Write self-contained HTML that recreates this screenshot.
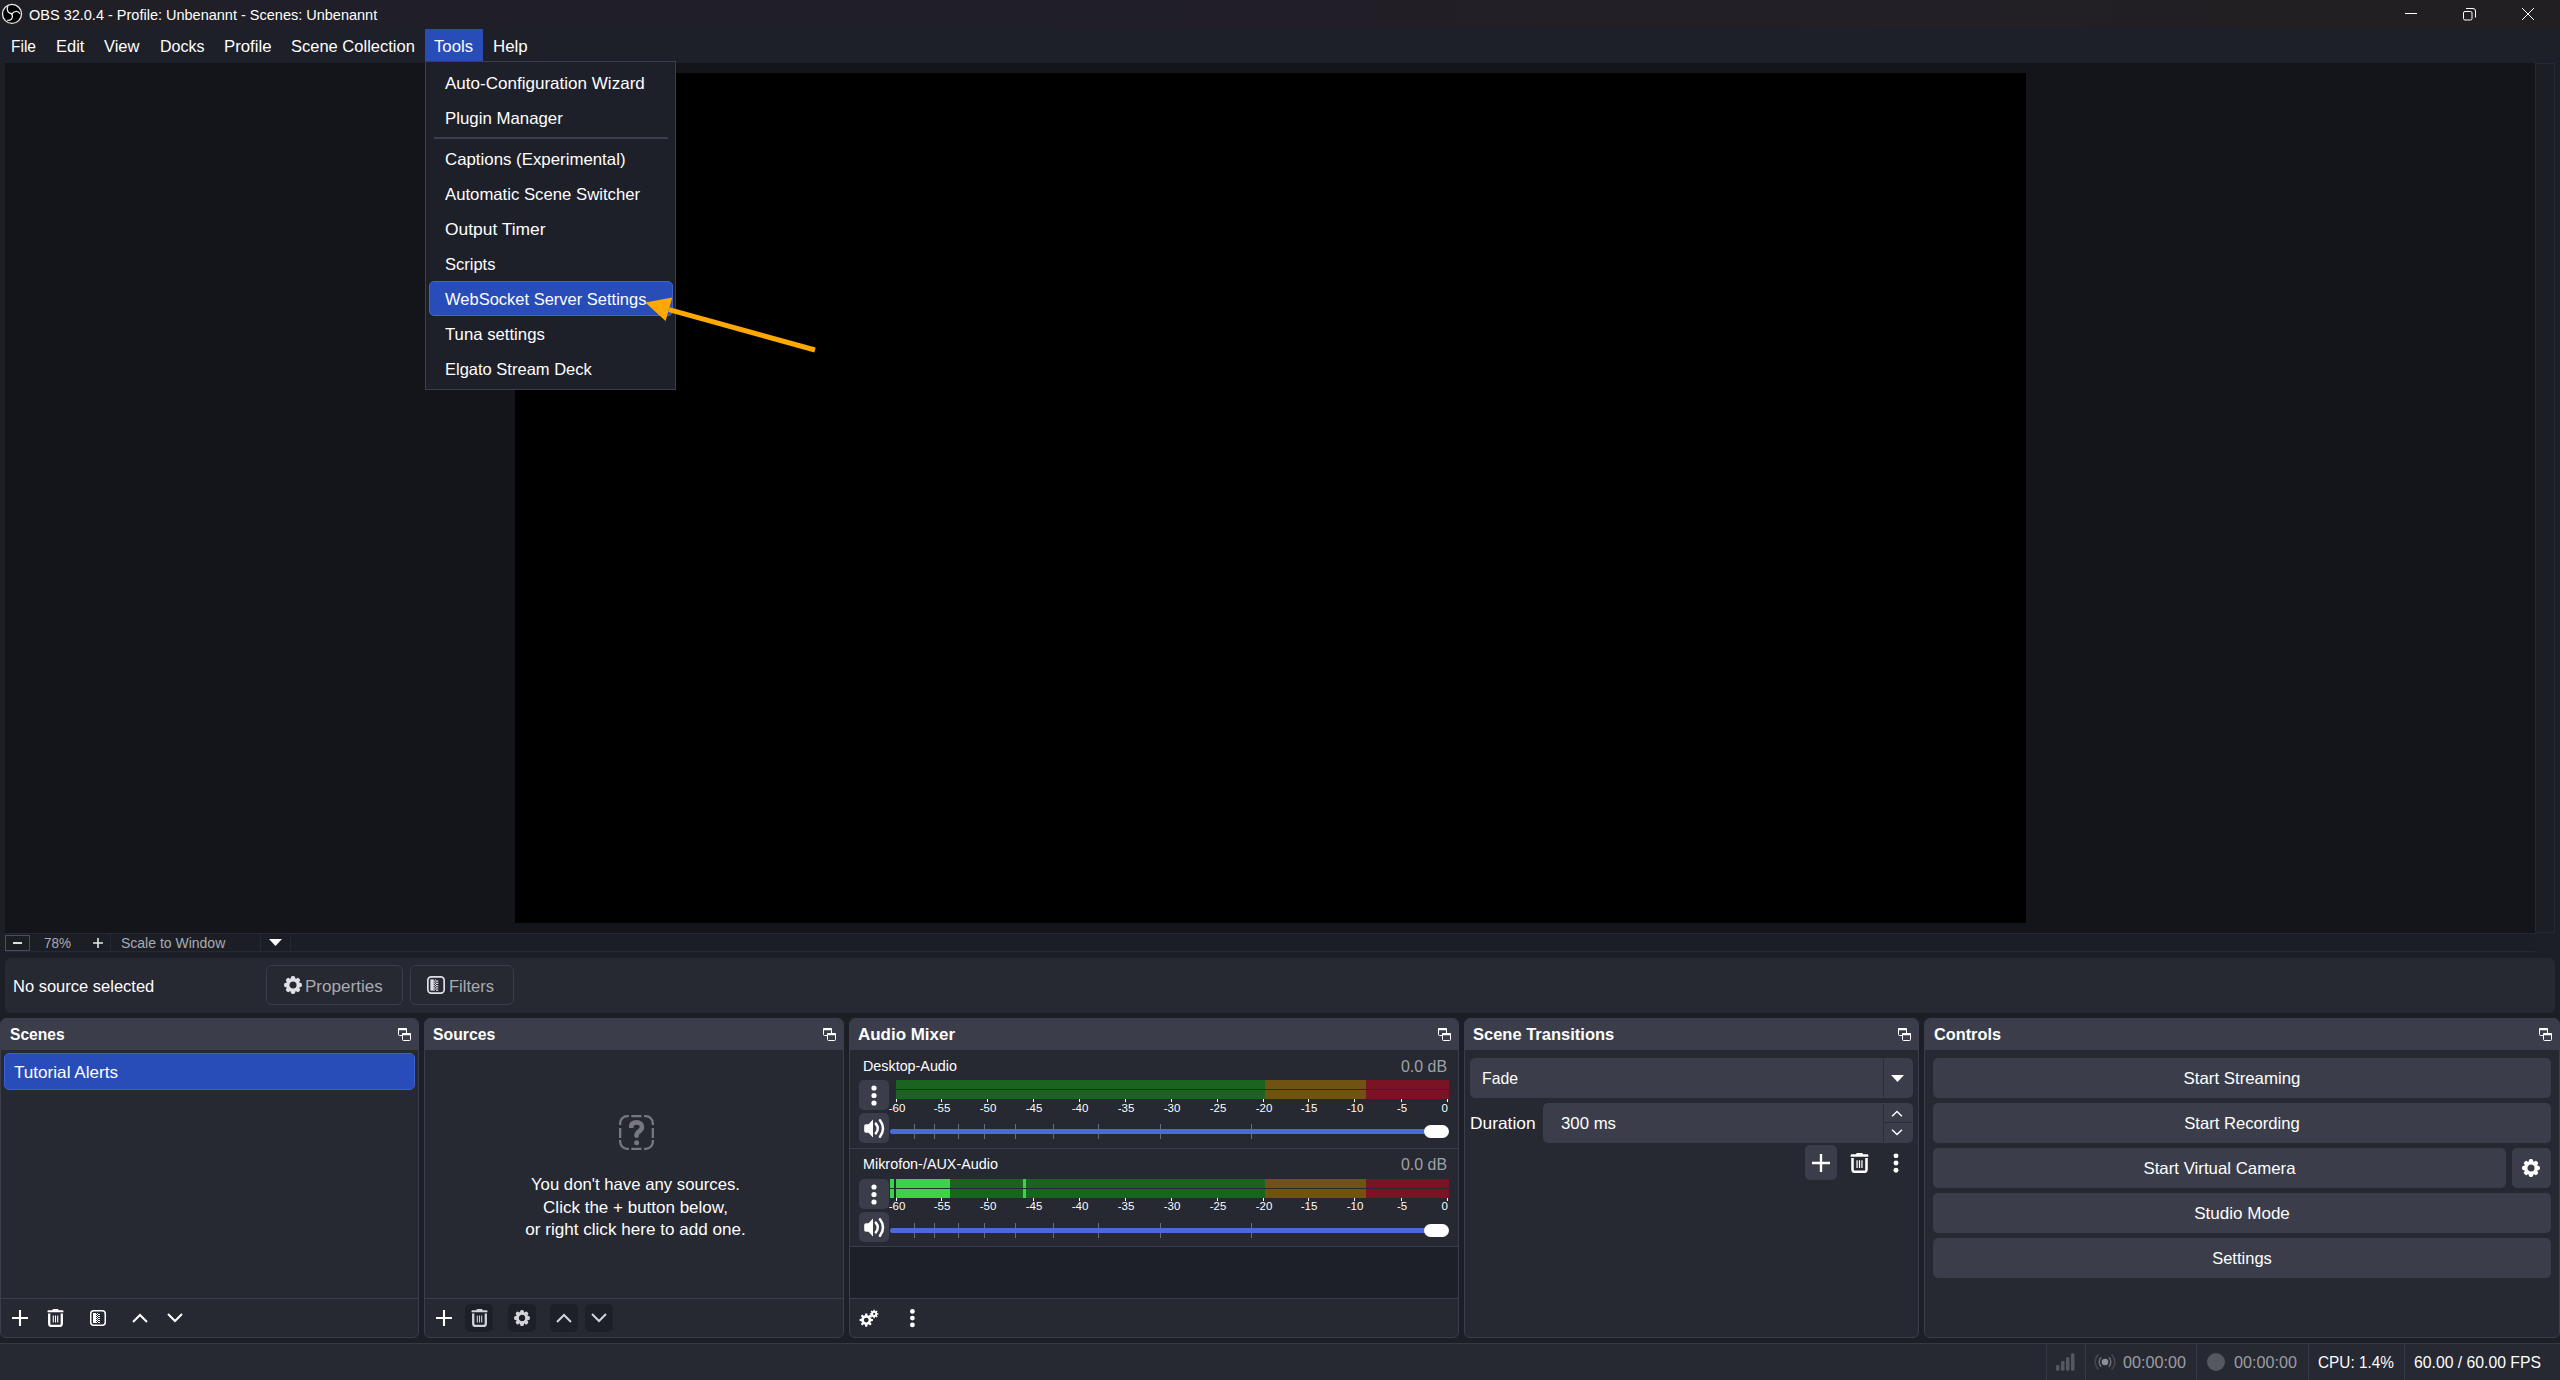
<!DOCTYPE html>
<html><head><meta charset="utf-8">
<style>
*{box-sizing:border-box;margin:0;padding:0}
html,body{width:2560px;height:1380px;overflow:hidden;background:#1d1f27;font-family:"Liberation Sans",sans-serif;color:#fefefe}
.a{position:absolute}
.t{position:absolute;white-space:pre;line-height:1;font-size:16.5px}
svg{position:absolute;overflow:visible}
#titlebar{left:0;top:0;width:2560px;height:29px;background:linear-gradient(90deg,#201f26 0%,#201e28 35%,#231f26 78%,#211f22 90%,#211f22 100%)}
#menubar{left:0;top:29px;width:2560px;height:34px;background:#1e2029}
#preview{left:5px;top:63px;width:2530px;height:870px;background:#14151a}
#black{left:515px;top:73px;width:1511px;height:850px;background:#000}
#vscroll{left:2535px;top:63px;width:20px;height:870px;background:#1c1e26;border:1px solid #262833}
#zoombar{left:5px;top:933px;width:2530px;height:19px;background:#1c1e26;border-top:1px solid #262833;border-bottom:1px solid #262833}
#ctx{left:5px;top:958px;width:2550px;height:55px;background:#262832;border-radius:6px}
.dock{position:absolute;top:1018px;height:320px;background:#262832;border:1px solid #3b3e4a;border-radius:6px;overflow:hidden}
.hd{position:absolute;left:-1px;top:-1px;right:-1px;height:32px;background:#3b3e4a}
.hd .t{font-weight:700;top:8px}
.fl{position:absolute;top:9px;width:14px;height:14px}
#status{left:0;top:1343px;width:2560px;height:37px;background:#262832;border-top:1px solid #363947}
#menu{left:425px;top:61px;width:251px;height:329px;background:#1e2029;border:1px solid #3c3f4b}
.mi{left:445px}
.btn{position:absolute;background:#3b3e4a;border-radius:5px}
.sep{position:absolute;background:#3a3d4a}
.grey{color:#a9abb1}
</style></head>
<body>
<div class="a" id="titlebar"></div>
<svg style="left:0;top:0" width="24" height="29" viewBox="0 0 24 29">
 <circle cx="12" cy="13.9" r="9.5" fill="#000" stroke="#e8e8e8" stroke-width="1.35"/>
 <path d="M11.8 13.8 C9.5 13.2 7.2 11.5 7.3 9.2 C7.3 8 7.5 7 8.1 6.2" fill="none" stroke="#e8e8e8" stroke-width="1.3"/>
 <path d="M11.8 13.8 C13 12.3 14.6 11.3 16.4 11.3 C18 11.3 19.2 12.2 19.9 13.7" fill="none" stroke="#e8e8e8" stroke-width="1.3"/>
 <path d="M11.8 13.8 C12.6 15.5 12.6 17.8 11.3 19.3 C10.3 20.3 8.8 20.6 7.2 20.4" fill="none" stroke="#e8e8e8" stroke-width="1.3"/>
 <circle cx="11.9" cy="13.8" r="1.1" fill="#e8e8e8"/>
</svg>
<span class="t" style="left:29px;top:8px;font-size:14.5px">OBS 32.0.4 - Profile: Unbenannt - Scenes: Unbenannt</span>
<svg style="left:2400px;top:0" width="160" height="29" viewBox="0 0 160 29">
 <path d="M5 13.5 H17" stroke="#fff" stroke-width="1"/>
 <rect x="63.5" y="11.5" width="8.5" height="8.5" rx="1.5" fill="none" stroke="#fff" stroke-width="1"/>
 <path d="M66 8.5 H73 Q75.5 8.5 75.5 11 V17.5" fill="none" stroke="#fff" stroke-width="1"/>
 <path d="M122 8 L134 20 M134 8 L122 20" stroke="#fff" stroke-width="1"/>
</svg>

<div class="a" id="menubar"></div>
<div class="a" style="left:425px;top:29px;width:58px;height:32px;background:#284cb8"></div>
<span class="t" style="left:11px;top:38px;transform:scaleX(0.9401);transform-origin:left top">File</span>
<span class="t" style="left:56px;top:38px">Edit</span>
<span class="t" style="left:104px;top:38px">View</span>
<span class="t" style="left:160px;top:38px;transform:scaleX(0.9707);transform-origin:left top">Docks</span>
<span class="t" style="left:224px;top:38px;transform:scaleX(1.0154);transform-origin:left top">Profile</span>
<span class="t" style="left:291px;top:38px">Scene Collection</span>
<span class="t" style="left:434px;top:38px;transform:scaleX(1.0122);transform-origin:left top">Tools</span>
<span class="t" style="left:493px;top:38px;transform:scaleX(1.0225);transform-origin:left top">Help</span>

<div class="a" id="preview"></div>
<div class="a" id="black"></div>
<div class="a" id="vscroll"></div>
<div class="a" id="zoombar"></div>
<!-- zoom controls -->
<div class="a" style="left:5px;top:935px;width:25px;height:16px;border:1px solid #4a4e5c"></div>
<div class="a" style="left:13px;top:942px;width:9px;height:2px;background:#e0e0e0"></div>
<span class="t grey" style="left:44px;top:936px;font-size:14px;transform:scaleX(0.9632);transform-origin:left top">78%</span>
<svg style="left:93px;top:938px" width="10" height="10"><path d="M5 0 V10 M0 5 H10" stroke="#e8e8e8" stroke-width="1.6"/></svg>
<div class="sep" style="left:110px;top:934px;width:1px;height:17px;background:#262833"></div>
<span class="t grey" style="left:121px;top:936px;font-size:14px">Scale to Window</span>
<div class="sep" style="left:260px;top:934px;width:1px;height:17px;background:#262833"></div>
<svg style="left:269px;top:939px" width="14" height="8"><path d="M0 0 H13 L6.5 7 Z" fill="#fff"/></svg>
<div class="sep" style="left:290px;top:934px;width:1px;height:17px;background:#262833"></div>

<div class="a" id="ctx"></div>
<span class="t" style="left:13px;top:978px">No source selected</span>
<div class="a" style="left:266px;top:965px;width:137px;height:40px;border:1px solid #3a3d4a;border-radius:6px"></div>
<svg style="left:284px;top:976px;width:18px;height:18px;color:#dfe0e6"><use href="#gear"/></svg>
<span class="t grey" style="left:305px;top:978px;transform:scaleX(1.0332);transform-origin:left top">Properties</span>
<div class="a" style="left:410px;top:965px;width:104px;height:40px;border:1px solid #3a3d4a;border-radius:6px"></div>
<svg style="left:427px;top:976px;width:18px;height:18px;color:#dfe0e6"><use href="#filt"/></svg>
<span class="t grey" style="left:449px;top:978px">Filters</span>

<svg width="0" height="0" style="position:absolute">
 <defs>
  <symbol id="float" viewBox="0 0 14 14">
   <rect x="1.5" y="1.5" width="8" height="7" rx="1" fill="none" stroke="#fff" stroke-width="1"/>
   <rect x="1" y="1" width="9" height="2.2" rx="0.8" fill="#fff"/>
   <rect x="5.5" y="6.5" width="8" height="7" rx="1" fill="#3b3e4a" stroke="#fff" stroke-width="1"/>
   <rect x="5" y="6" width="9" height="2.2" rx="0.8" fill="#fff"/>
  </symbol>
  <symbol id="plus" viewBox="0 0 16 16"><path d="M8 0 V16 M0 8 H16" stroke="currentColor" stroke-width="2.1"/></symbol>
  <symbol id="trash" viewBox="0 0 17 18">
   <path d="M0.5 2.3 Q0.5 1.2 1.6 1.2 H5.3 Q5.6 0 6.6 0 H10.4 Q11.4 0 11.7 1.2 H15.4 Q16.5 1.2 16.5 2.3 V3.3 H0.5Z" fill="currentColor"/>
   <path d="M2.2 4.5 V14.8 Q2.2 17 4.4 17 H12.6 Q14.8 17 14.8 14.8 V4.5" fill="none" stroke="currentColor" stroke-width="2.3"/>
   <path d="M6.3 6.5 V13.5 M8.5 6.5 V13.5 M10.7 6.5 V13.5" stroke="currentColor" stroke-width="1.1"/>
  </symbol>
  
  <symbol id="filt" viewBox="0 0 16 16">
   <rect x="0.75" y="0.75" width="14.5" height="14.5" rx="3" fill="none" stroke="currentColor" stroke-width="1.5"/>
   <rect x="3" y="3" width="3" height="10" fill="currentColor"/>
   <path fill="currentColor" d="M6 4h1v1h-1zM6 6h1v1h-1zM6 8h1v1h-1zM6 10h1v1h-1zM6 12h1v1h-1zM7 3h1v1h-1zM7 5h1v1h-1zM7 7h1v1h-1zM7 9h1v1h-1zM7 11h1v1h-1zM8 4h1v1h-1zM8 6h1v1h-1zM8 8h1v1h-1zM8 10h1v1h-1zM8 12h1v1h-1zM9 4h1v1h-1zM9 6h1v1h-1zM9 8h1v1h-1zM9 10h1v1h-1zM9 12h1v1h-1z"/>
  </symbol>
  <symbol id="up" viewBox="0 0 16 10"><path d="M1 9 L8 2 L15 9" fill="none" stroke="currentColor" stroke-width="2"/></symbol>
  <symbol id="down" viewBox="0 0 16 10"><path d="M1 1 L8 8 L15 1" fill="none" stroke="currentColor" stroke-width="2"/></symbol>
  <symbol id="gear" viewBox="0 0 18 18"><circle cx="9" cy="9" r="5.25" fill="none" stroke="currentColor" stroke-width="3.3"/><g fill="currentColor"><rect x="6.85" y="0.1" width="4.3" height="5" rx="1.7" transform="rotate(0 9 9)"/><rect x="6.85" y="0.1" width="4.3" height="5" rx="1.7" transform="rotate(45 9 9)"/><rect x="6.85" y="0.1" width="4.3" height="5" rx="1.7" transform="rotate(90 9 9)"/><rect x="6.85" y="0.1" width="4.3" height="5" rx="1.7" transform="rotate(135 9 9)"/><rect x="6.85" y="0.1" width="4.3" height="5" rx="1.7" transform="rotate(180 9 9)"/><rect x="6.85" y="0.1" width="4.3" height="5" rx="1.7" transform="rotate(225 9 9)"/><rect x="6.85" y="0.1" width="4.3" height="5" rx="1.7" transform="rotate(270 9 9)"/><rect x="6.85" y="0.1" width="4.3" height="5" rx="1.7" transform="rotate(315 9 9)"/></g></symbol>
  <symbol id="dots" viewBox="0 0 6 22"><circle cx="3" cy="3" r="2.6" fill="#fff"/><circle cx="3" cy="10.5" r="2.6" fill="#fff"/><circle cx="3" cy="18" r="2.6" fill="#fff"/></symbol>
  <symbol id="spk" viewBox="0 0 22 20">
   <path d="M0.2 8 Q0.2 6.2 2 6.2 H4.5 L9 1.6 V19.4 L4.5 14.8 H2 Q0.2 14.8 0.2 13 Z" fill="#fff"/>
   <path d="M11.8 5.6 Q15.8 10.5 11.8 15.4" fill="none" stroke="#fff" stroke-width="2.5" stroke-linecap="round"/>
   <path d="M16 2.3 Q22 10.5 16 18.7" fill="none" stroke="#fff" stroke-width="2.5" stroke-linecap="round"/>
  </symbol>
 </defs>
</svg>

<!-- Scenes dock -->
<div class="dock" style="left:0;width:419px"><div class="hd"><span class="t" style="left:10px;transform:scaleX(0.9447);transform-origin:left top">Scenes</span></div>
 <div class="a" style="left:3px;top:34px;width:411px;height:37px;background:#284cb8;border:1px solid #3d5fcf;border-radius:5px"></div>
 <span class="t" style="left:13px;top:45px;transform:scaleX(1.0372);transform-origin:left top">Tutorial Alerts</span>
 <div class="sep" style="left:0;top:279px;width:419px;height:1px"></div>
</div>
<svg style="left:397px;top:1027px;width:14px;height:14px"><use href="#float"/></svg>
<svg style="left:12px;top:1310px;width:16px;height:16px;color:#fff"><use href="#plus"/></svg>
<svg style="left:47px;top:1309px;width:17px;height:18px;color:#fff"><use href="#trash"/></svg>
<svg style="left:90px;top:1310px;width:16px;height:16px;color:#fff"><use href="#filt"/></svg>
<svg style="left:132px;top:1313px;width:16px;height:10px;color:#fff"><use href="#up"/></svg>
<svg style="left:167px;top:1313px;width:16px;height:10px;color:#fff"><use href="#down"/></svg>

<!-- Sources dock -->
<div class="dock" style="left:424px;width:420px"><div class="hd"><span class="t" style="left:9px;transform:scaleX(0.9551);transform-origin:left top">Sources</span></div>
 <div class="sep" style="left:0;top:279px;width:420px;height:1px"></div>
</div>
<svg style="left:822px;top:1027px;width:14px;height:14px"><use href="#float"/></svg>
<svg style="left:618.8px;top:1115px" width="35" height="35" viewBox="0 0 35 35">
 <path d="M1.15 9.9 V8.15 A7 7 0 0 1 8.15 1.15 H9.9 M12.3 1.15 H22.4 M25.1 1.15 H26.85 A7 7 0 0 1 33.85 8.15 V9.9 M33.85 12.9 V22.9 M33.85 25.1 V26.85 A7 7 0 0 1 26.85 33.85 H25.1 M22.4 33.85 H12.3 M9.9 33.85 H8.15 A7 7 0 0 1 1.15 26.85 V25.1 M1.15 22.9 V12.9" fill="none" stroke="#76787e" stroke-width="2.3"/>
 <path d="M12.2 12.9 V12 C12.2 8.6 14.6 7.4 17.6 7.4 C21 7.4 23 9.3 23 12 C23 14.5 21.2 15.6 19.8 16.7 C18.2 17.9 17.6 19 17.6 20.8" fill="none" stroke="#76787e" stroke-width="4.6"/>
 <circle cx="17.6" cy="20.8" r="2.3" fill="#76787e"/>
 <circle cx="17.6" cy="27.7" r="2.5" fill="#76787e"/>
</svg>
<span class="t" style="left:0;width:1271px;text-align:center;top:1176px;transform:scaleX(1.0136);transform-origin:center top">You don't have any sources.</span>
<span class="t" style="left:0;width:1271px;text-align:center;top:1199px;transform:scaleX(1.0305);transform-origin:center top">Click the + button below,</span>
<span class="t" style="left:0;width:1271px;text-align:center;top:1221px;transform:scaleX(1.0362);transform-origin:center top">or right click here to add one.</span>
<svg style="left:436px;top:1310px;width:16px;height:16px;color:#fff"><use href="#plus"/></svg>
<div class="a" style="left:465px;top:1304px;width:28px;height:28px;background:#1e2029;border-radius:5px"></div>
<svg style="left:471px;top:1309px;width:17px;height:18px;color:#d3d4da"><use href="#trash"/></svg>
<div class="a" style="left:508px;top:1304px;width:28px;height:28px;background:#1e2029;border-radius:5px"></div>
<svg style="left:514px;top:1310px;width:16px;height:16px;color:#d3d4da"><use href="#gear"/></svg>
<div class="a" style="left:550px;top:1304px;width:28px;height:28px;background:#1e2029;border-radius:5px"></div>
<svg style="left:556px;top:1313px;width:16px;height:10px;color:#d3d4da"><use href="#up"/></svg>
<div class="a" style="left:585px;top:1304px;width:28px;height:28px;background:#1e2029;border-radius:5px"></div>
<svg style="left:591px;top:1313px;width:16px;height:10px;color:#d3d4da"><use href="#down"/></svg>

<!--MIXER-->
<div class="dock" style="left:849px;width:610px"><div class="hd"><span class="t" style="left:9px;transform:scaleX(1.0271);transform-origin:left top">Audio Mixer</span></div>
 <div class="a" style="left:0;top:228px;width:608px;height:51px;background:#1e2029"></div>
 <div class="sep" style="left:0;top:129px;width:610px;height:1px"></div>
 <div class="sep" style="left:0;top:227px;width:610px;height:1px"></div>
 <div class="sep" style="left:0;top:279px;width:610px;height:1px"></div>
</div>
<svg style="left:1437px;top:1027px;width:14px;height:14px"><use href="#float"/></svg>
<span class="t" style="left:863px;top:1059px;font-size:14.5px;transform:scaleX(0.9883);transform-origin:left top">Desktop-Audio</span>
<span class="t" style="left:1300px;width:147px;text-align:right;top:1058px;color:#9fa1a6;transform:scaleX(0.9640);transform-origin:right top">0.0 dB</span>
<div class="btn" style="left:859px;top:1080px;width:30px;height:30px"></div>
<svg style="left:871px;top:1084.5px;width:6px;height:22px"><use href="#dots"/></svg>
<div class="btn" style="left:859px;top:1113px;width:30px;height:30px"></div>
<svg style="left:864px;top:1118px;width:22px;height:20px"><use href="#spk"/></svg>
<div class="a" style="left:896px;top:1080px;width:369px;height:9px;background:#19641e"></div>
<div class="a" style="left:1265px;top:1080px;width:101px;height:9px;background:#705212"></div>
<div class="a" style="left:1366px;top:1080px;width:83px;height:9px;background:#7a1424"></div>
<div class="a" style="left:896px;top:1090px;width:369px;height:9px;background:#19641e"></div>
<div class="a" style="left:1265px;top:1090px;width:101px;height:9px;background:#705212"></div>
<div class="a" style="left:1366px;top:1090px;width:83px;height:9px;background:#7a1424"></div>
<div class="a" style="left:896px;top:1099px;width:1px;height:3px;background:#fff"></div>
<span class="t" style="left:866px;width:62px;text-align:center;top:1103px;font-size:11.5px">-60</span>
<div class="a" style="left:941px;top:1099px;width:1px;height:3px;background:#fff"></div>
<span class="t" style="left:911px;width:62px;text-align:center;top:1103px;font-size:11.5px">-55</span>
<div class="a" style="left:987px;top:1099px;width:1px;height:3px;background:#fff"></div>
<span class="t" style="left:957px;width:62px;text-align:center;top:1103px;font-size:11.5px">-50</span>
<div class="a" style="left:1033px;top:1099px;width:1px;height:3px;background:#fff"></div>
<span class="t" style="left:1003px;width:62px;text-align:center;top:1103px;font-size:11.5px">-45</span>
<div class="a" style="left:1079px;top:1099px;width:1px;height:3px;background:#fff"></div>
<span class="t" style="left:1049px;width:62px;text-align:center;top:1103px;font-size:11.5px">-40</span>
<div class="a" style="left:1125px;top:1099px;width:1px;height:3px;background:#fff"></div>
<span class="t" style="left:1095px;width:62px;text-align:center;top:1103px;font-size:11.5px">-35</span>
<div class="a" style="left:1171px;top:1099px;width:1px;height:3px;background:#fff"></div>
<span class="t" style="left:1141px;width:62px;text-align:center;top:1103px;font-size:11.5px">-30</span>
<div class="a" style="left:1217px;top:1099px;width:1px;height:3px;background:#fff"></div>
<span class="t" style="left:1187px;width:62px;text-align:center;top:1103px;font-size:11.5px">-25</span>
<div class="a" style="left:1263px;top:1099px;width:1px;height:3px;background:#fff"></div>
<span class="t" style="left:1233px;width:62px;text-align:center;top:1103px;font-size:11.5px">-20</span>
<div class="a" style="left:1308px;top:1099px;width:1px;height:3px;background:#fff"></div>
<span class="t" style="left:1278px;width:62px;text-align:center;top:1103px;font-size:11.5px">-15</span>
<div class="a" style="left:1354px;top:1099px;width:1px;height:3px;background:#fff"></div>
<span class="t" style="left:1324px;width:62px;text-align:center;top:1103px;font-size:11.5px">-10</span>
<div class="a" style="left:1401px;top:1099px;width:1px;height:3px;background:#fff"></div>
<span class="t" style="left:1371px;width:62px;text-align:center;top:1103px;font-size:11.5px">-5</span>
<div class="a" style="left:1447px;top:1099px;width:1px;height:3px;background:#fff"></div>
<span class="t" style="left:1387px;width:61px;text-align:right;top:1103px;font-size:11.5px">0</span>
<div class="a" style="left:914px;top:1124px;width:1px;height:15px;background:#6a6e79"></div>
<div class="a" style="left:934px;top:1124px;width:1px;height:15px;background:#6a6e79"></div>
<div class="a" style="left:958px;top:1124px;width:1px;height:15px;background:#6a6e79"></div>
<div class="a" style="left:984px;top:1124px;width:1px;height:15px;background:#6a6e79"></div>
<div class="a" style="left:1015px;top:1124px;width:1px;height:15px;background:#6a6e79"></div>
<div class="a" style="left:1053px;top:1124px;width:1px;height:15px;background:#6a6e79"></div>
<div class="a" style="left:1098px;top:1124px;width:1px;height:15px;background:#6a6e79"></div>
<div class="a" style="left:1160px;top:1124px;width:1px;height:15px;background:#6a6e79"></div>
<div class="a" style="left:1251px;top:1124px;width:1px;height:15px;background:#6a6e79"></div>
<div class="a" style="left:890px;top:1129px;width:550px;height:5px;background:#4a6ad8;border-radius:3px"></div>
<div class="a" style="left:1424px;top:1125px;width:25px;height:13px;background:#fff;border-radius:6.5px"></div>
<span class="t" style="left:863px;top:1157px;font-size:14.5px;transform:scaleX(0.9913);transform-origin:left top">Mikrofon-/AUX-Audio</span>
<span class="t" style="left:1300px;width:147px;text-align:right;top:1156px;color:#9fa1a6;transform:scaleX(0.9640);transform-origin:right top">0.0 dB</span>
<div class="btn" style="left:859px;top:1179px;width:30px;height:30px"></div>
<svg style="left:871px;top:1183.5px;width:6px;height:22px"><use href="#dots"/></svg>
<div class="btn" style="left:859px;top:1212px;width:30px;height:30px"></div>
<svg style="left:864px;top:1217px;width:22px;height:20px"><use href="#spk"/></svg>
<div class="a" style="left:896px;top:1179px;width:369px;height:9px;background:#19641e"></div>
<div class="a" style="left:1265px;top:1179px;width:101px;height:9px;background:#705212"></div>
<div class="a" style="left:1366px;top:1179px;width:83px;height:9px;background:#7a1424"></div>
<div class="a" style="left:890px;top:1179px;width:4px;height:9px;background:#3ad34b"></div>
<div class="a" style="left:896px;top:1179px;width:54px;height:9px;background:#3ad34b"></div>
<div class="a" style="left:1023px;top:1179px;width:3px;height:9px;background:#3ad34b"></div>
<div class="a" style="left:896px;top:1189px;width:369px;height:9px;background:#19641e"></div>
<div class="a" style="left:1265px;top:1189px;width:101px;height:9px;background:#705212"></div>
<div class="a" style="left:1366px;top:1189px;width:83px;height:9px;background:#7a1424"></div>
<div class="a" style="left:890px;top:1189px;width:4px;height:9px;background:#3ad34b"></div>
<div class="a" style="left:896px;top:1189px;width:54px;height:9px;background:#3ad34b"></div>
<div class="a" style="left:1023px;top:1189px;width:3px;height:9px;background:#3ad34b"></div>
<div class="a" style="left:896px;top:1198px;width:1px;height:3px;background:#fff"></div>
<span class="t" style="left:866px;width:62px;text-align:center;top:1201px;font-size:11.5px">-60</span>
<div class="a" style="left:941px;top:1198px;width:1px;height:3px;background:#fff"></div>
<span class="t" style="left:911px;width:62px;text-align:center;top:1201px;font-size:11.5px">-55</span>
<div class="a" style="left:987px;top:1198px;width:1px;height:3px;background:#fff"></div>
<span class="t" style="left:957px;width:62px;text-align:center;top:1201px;font-size:11.5px">-50</span>
<div class="a" style="left:1033px;top:1198px;width:1px;height:3px;background:#fff"></div>
<span class="t" style="left:1003px;width:62px;text-align:center;top:1201px;font-size:11.5px">-45</span>
<div class="a" style="left:1079px;top:1198px;width:1px;height:3px;background:#fff"></div>
<span class="t" style="left:1049px;width:62px;text-align:center;top:1201px;font-size:11.5px">-40</span>
<div class="a" style="left:1125px;top:1198px;width:1px;height:3px;background:#fff"></div>
<span class="t" style="left:1095px;width:62px;text-align:center;top:1201px;font-size:11.5px">-35</span>
<div class="a" style="left:1171px;top:1198px;width:1px;height:3px;background:#fff"></div>
<span class="t" style="left:1141px;width:62px;text-align:center;top:1201px;font-size:11.5px">-30</span>
<div class="a" style="left:1217px;top:1198px;width:1px;height:3px;background:#fff"></div>
<span class="t" style="left:1187px;width:62px;text-align:center;top:1201px;font-size:11.5px">-25</span>
<div class="a" style="left:1263px;top:1198px;width:1px;height:3px;background:#fff"></div>
<span class="t" style="left:1233px;width:62px;text-align:center;top:1201px;font-size:11.5px">-20</span>
<div class="a" style="left:1308px;top:1198px;width:1px;height:3px;background:#fff"></div>
<span class="t" style="left:1278px;width:62px;text-align:center;top:1201px;font-size:11.5px">-15</span>
<div class="a" style="left:1354px;top:1198px;width:1px;height:3px;background:#fff"></div>
<span class="t" style="left:1324px;width:62px;text-align:center;top:1201px;font-size:11.5px">-10</span>
<div class="a" style="left:1401px;top:1198px;width:1px;height:3px;background:#fff"></div>
<span class="t" style="left:1371px;width:62px;text-align:center;top:1201px;font-size:11.5px">-5</span>
<div class="a" style="left:1447px;top:1198px;width:1px;height:3px;background:#fff"></div>
<span class="t" style="left:1387px;width:61px;text-align:right;top:1201px;font-size:11.5px">0</span>
<div class="a" style="left:914px;top:1223px;width:1px;height:15px;background:#6a6e79"></div>
<div class="a" style="left:934px;top:1223px;width:1px;height:15px;background:#6a6e79"></div>
<div class="a" style="left:958px;top:1223px;width:1px;height:15px;background:#6a6e79"></div>
<div class="a" style="left:984px;top:1223px;width:1px;height:15px;background:#6a6e79"></div>
<div class="a" style="left:1015px;top:1223px;width:1px;height:15px;background:#6a6e79"></div>
<div class="a" style="left:1053px;top:1223px;width:1px;height:15px;background:#6a6e79"></div>
<div class="a" style="left:1098px;top:1223px;width:1px;height:15px;background:#6a6e79"></div>
<div class="a" style="left:1160px;top:1223px;width:1px;height:15px;background:#6a6e79"></div>
<div class="a" style="left:1251px;top:1223px;width:1px;height:15px;background:#6a6e79"></div>
<div class="a" style="left:890px;top:1228px;width:550px;height:5px;background:#4a6ad8;border-radius:3px"></div>
<div class="a" style="left:1424px;top:1224px;width:25px;height:13px;background:#fff;border-radius:6.5px"></div>
<svg style="left:857px;top:1307px" width="24" height="22" viewBox="0 0 24 22"><path fill="#fff" fill-rule="evenodd" transform="translate(2.5,6.3) scale(0.75)" d="M7.40 2.60 L7.59 0.11 L10.41 0.11 L10.60 2.60 L12.39 3.34 L14.29 1.72 L16.28 3.71 L14.66 5.61 L15.40 7.40 L17.89 7.59 L17.89 10.41 L15.40 10.60 L14.66 12.39 L16.28 14.29 L14.29 16.28 L12.39 14.66 L10.60 15.40 L10.41 17.89 L7.59 17.89 L7.40 15.40 L5.61 14.66 L3.71 16.28 L1.72 14.29 L3.34 12.39 L2.60 10.60 L0.11 10.41 L0.11 7.59 L2.60 7.40 L3.34 5.61 L1.72 3.71 L3.71 1.72 L5.61 3.34Z M12.20 9.0 A3.2 3.2 0 1 0 5.80 9.0 A3.2 3.2 0 1 0 12.20 9.0Z"/><path fill="#fff" fill-rule="evenodd" transform="translate(12.8,2.6) scale(0.48)" d="M7.40 2.60 L7.59 0.11 L10.41 0.11 L10.60 2.60 L12.39 3.34 L14.29 1.72 L16.28 3.71 L14.66 5.61 L15.40 7.40 L17.89 7.59 L17.89 10.41 L15.40 10.60 L14.66 12.39 L16.28 14.29 L14.29 16.28 L12.39 14.66 L10.60 15.40 L10.41 17.89 L7.59 17.89 L7.40 15.40 L5.61 14.66 L3.71 16.28 L1.72 14.29 L3.34 12.39 L2.60 10.60 L0.11 10.41 L0.11 7.59 L2.60 7.40 L3.34 5.61 L1.72 3.71 L3.71 1.72 L5.61 3.34Z M11.2 9.0 A2.2 2.2 0 1 0 6.8 9.0 A2.2 2.2 0 1 0 11.2 9.0Z"/></svg>
<svg style="left:909.5px;top:1308.8px" width="5" height="18" viewBox="0 0 5 18"><circle cx="2.4" cy="2.4" r="2.4" fill="#fff"/><circle cx="2.4" cy="9.1" r="2.4" fill="#fff"/><circle cx="2.4" cy="15.9" r="2.4" fill="#fff"/></svg>
<!--TRANS-->
<div class="dock" style="left:1464px;width:455px"><div class="hd"><span class="t" style="left:9px">Scene Transitions</span></div></div>
<svg style="left:1897px;top:1027px;width:14px;height:14px"><use href="#float"/></svg>
<div class="btn" style="left:1470px;top:1058px;width:443px;height:40px"></div>
<div class="a" style="left:1883px;top:1059px;width:1px;height:38px;background:#2a2c36"></div>
<svg style="left:1891px;top:1075px" width="13" height="7"><path d="M0 0 H13 L6.5 7Z" fill="#fff"/></svg>
<span class="t" style="left:1482px;top:1070px;transform:scaleX(0.9572);transform-origin:left top">Fade</span>
<span class="t" style="left:1470px;top:1115px;transform:scaleX(1.0517);transform-origin:left top">Duration</span>
<div class="btn" style="left:1543px;top:1103px;width:370px;height:40px"></div>
<span class="t" style="left:1561px;top:1115px;transform:scaleX(1.0165);transform-origin:left top">300 ms</span>
<div class="a" style="left:1883px;top:1104px;width:1px;height:38px;background:#2a2c36"></div>
<div class="a" style="left:1884px;top:1122px;width:28px;height:1px;background:#2a2c36"></div>
<svg style="left:1891px;top:1110px;width:12px;height:7px;color:#fff"><use href="#up"/></svg>
<svg style="left:1891px;top:1129px;width:12px;height:7px;color:#fff"><use href="#down"/></svg>
<div class="btn" style="left:1805px;top:1145px;width:32px;height:35px"></div>
<svg style="left:1812px;top:1154px;width:18px;height:18px;color:#fff"><use href="#plus"/></svg>
<svg style="left:1850px;top:1153px;width:19px;height:20px;color:#fff"><use href="#trash"/></svg>
<svg style="left:1893px;top:1153px;width:6px;height:21px"><use href="#dots"/></svg>
<div class="dock" style="left:1924px;width:636px"><div class="hd"><span class="t" style="left:10px;transform:scaleX(0.9876);transform-origin:left top">Controls</span></div></div>
<svg style="left:2538px;top:1027px;width:14px;height:14px"><use href="#float"/></svg>
<div class="btn" style="left:1933px;top:1058px;width:618px;height:40px"></div>
<span class="t" style="left:1933px;width:618px;text-align:center;top:1070px;transform:scaleX(1.0206);transform-origin:center top">Start Streaming</span>
<div class="btn" style="left:1933px;top:1103px;width:618px;height:40px"></div>
<span class="t" style="left:1933px;width:618px;text-align:center;top:1115px;transform:scaleX(1.0092);transform-origin:center top">Start Recording</span>
<div class="btn" style="left:1933px;top:1148px;width:573px;height:40px"></div>
<span class="t" style="left:1933px;width:573px;text-align:center;top:1160px;transform:scaleX(1.0190);transform-origin:center top">Start Virtual Camera</span>
<div class="btn" style="left:2512px;top:1148px;width:39px;height:40px"></div>
<svg style="left:2522px;top:1159px;width:18px;height:18px;color:#fff"><use href="#gear"/></svg>
<div class="btn" style="left:1933px;top:1193px;width:618px;height:40px"></div>
<span class="t" style="left:1933px;width:618px;text-align:center;top:1205px;transform:scaleX(1.0328);transform-origin:center top">Studio Mode</span>
<div class="btn" style="left:1933px;top:1238px;width:618px;height:40px"></div>
<span class="t" style="left:1933px;width:618px;text-align:center;top:1250px">Settings</span>
<!--CONTROLS-->

<div class="a" id="status"></div>
<!--STATUS-->
<div class="a" style="left:2046px;top:1344px;width:1px;height:36px;background:#363947"></div>
<div class="a" style="left:2085px;top:1344px;width:1px;height:36px;background:#363947"></div>
<div class="a" style="left:2196px;top:1344px;width:1px;height:36px;background:#363947"></div>
<div class="a" style="left:2308px;top:1344px;width:1px;height:36px;background:#363947"></div>
<div class="a" style="left:2404px;top:1344px;width:1px;height:36px;background:#363947"></div>
<svg style="left:2055px;top:1352px" width="22" height="20" viewBox="0 0 22 20"><rect x="1" y="12.7" width="3.5" height="6.1" rx="1.6" fill="#55585f"/><rect x="6" y="8.7" width="3.5" height="10.1" rx="1.6" fill="#55585f"/><rect x="11" y="5" width="3.5" height="13.8" rx="1.6" fill="#55585f"/><rect x="16" y="1" width="3.5" height="17.8" rx="1.6" fill="#55585f"/></svg>
<svg style="left:2093px;top:1350px" width="24" height="24" viewBox="0 0 24 24"><circle cx="12" cy="12" r="3.3" fill="#8d8f95"/><path d="M8.2 7.3 A6.5 6.5 0 0 0 8.2 16.7 M15.8 7.3 A6.5 6.5 0 0 1 15.8 16.7" fill="none" stroke="#6d6f76" stroke-width="1.5"/><path d="M5.4 4.6 A10 10 0 0 0 5.4 19.4 M18.6 4.6 A10 10 0 0 1 18.6 19.4" fill="none" stroke="#44474f" stroke-width="1.5"/></svg>
<span class="t" style="left:2123px;top:1354px;color:#9c9ea3;transform:scaleX(0.9808);transform-origin:left top">00:00:00</span>
<div class="a" style="left:2207px;top:1353px;width:18px;height:18px;border-radius:9px;background:#55585f"></div>
<span class="t" style="left:2234px;top:1354px;color:#9c9ea3;transform:scaleX(0.9808);transform-origin:left top">00:00:00</span>
<span class="t" style="left:2318px;top:1354px;transform:scaleX(0.9311);transform-origin:left top">CPU: 1.4%</span>
<span class="t" style="left:2414px;top:1354px;transform:scaleX(0.9548);transform-origin:left top">60.00 / 60.00 FPS</span>
<!--/STATUS-->

<div class="a" id="menu"></div>
<div class="a" style="left:434px;top:137px;width:234px;height:2px;background:#3c3f4b"></div>
<div class="a" style="left:429px;top:281px;width:244px;height:35px;background:#284cb8;border:1px solid #4063d2;border-radius:5px"></div>
<span class="t mi" style="top:75px;transform:scaleX(1.0325);transform-origin:left top">Auto-Configuration Wizard</span>
<span class="t mi" style="top:110px;transform:scaleX(1.0192);transform-origin:left top">Plugin Manager</span>
<span class="t mi" style="top:151px;transform:scaleX(1.0198);transform-origin:left top">Captions (Experimental)</span>
<span class="t mi" style="top:186px;transform:scaleX(1.0130);transform-origin:left top">Automatic Scene Switcher</span>
<span class="t mi" style="top:221px;transform:scaleX(1.0548);transform-origin:left top">Output Timer</span>
<span class="t mi" style="top:256px">Scripts</span>
<span class="t mi" style="top:291px">WebSocket Server Settings</span>
<span class="t mi" style="top:326px;transform:scaleX(1.0137);transform-origin:left top">Tuna settings</span>
<span class="t mi" style="top:361px">Elgato Stream Deck</span>
<svg style="left:0;top:0" width="2560" height="1380" viewBox="0 0 2560 1380">
 <path d="M669 309.6 L815 350" stroke="#ffa800" stroke-width="5"/>
 <path d="M645.3 302.4 L672.3 297.6 L665.6 321 Z" fill="#ffa800"/>
</svg>
</body></html>
